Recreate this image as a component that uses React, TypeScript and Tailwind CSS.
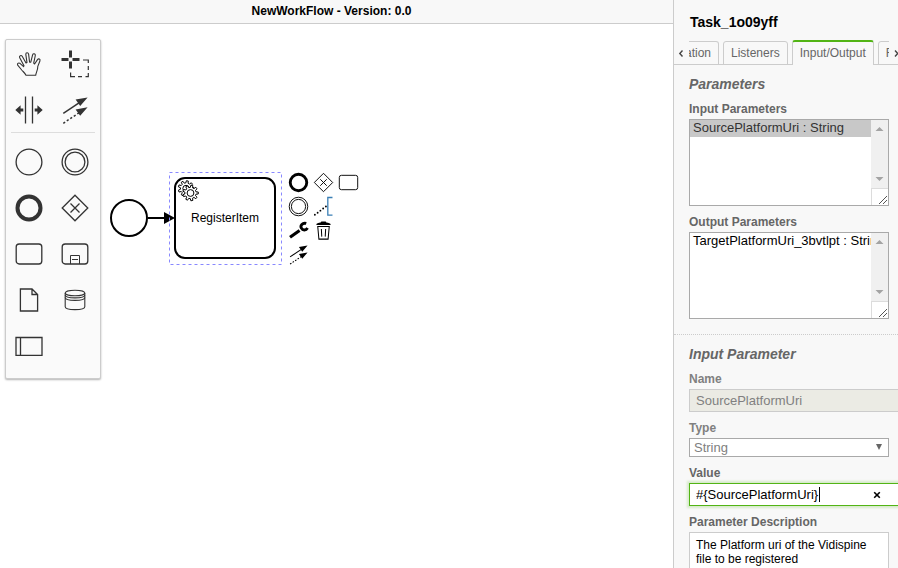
import React from "react";
import clsx from "clsx";

type IconProps = { className?: string };

const Glyph = ({
  children,
  className = "size-8",
}: {
  children: React.ReactNode;
  className?: string;
}) => (
  <svg
    viewBox="0 0 32 32"
    className={className}
    fill="none"
    stroke="currentColor"
    strokeWidth="1.3"
    aria-hidden="true"
  >
    {children}
  </svg>
);

const HandIcon = (props: IconProps) => (
  <Glyph {...props}>
    <path
      strokeWidth="1.1"
      strokeLinejoin="round"
      d="M13 27.3 C12 25 10.5 24 8.7 22 L4.7 17.2 C4 15.8 5.2 14.6 6.7 15.2 L10.6 18.6 L11 17.8 L6.6 9.6 C6 7.8 8.2 6.8 9.2 8.3 L13 15 L14 14.6 L12.8 6.4 C12.8 4.2 15.2 4.2 15.6 6.1 L16.6 14.2 L17.8 14.2 L19.6 6.8 C20.2 5 22.6 5.6 22.3 7.5 L20.7 15.2 L21.6 16 L24.5 11.6 C25.6 10.2 27.6 11.2 26.9 13 L24.8 18.4 C24.8 22 23.2 24 22.7 27.3 Z"
    />
  </Glyph>
);

const LassoIcon = (props: IconProps) => (
  <Glyph {...props}>
    <path
      strokeWidth="3"
      d="M2.5 11.5 H9.5 M13.5 11.5 H20.5 M11.5 2.5 V9.5 M11.5 13.5 V20.5"
    />
    <path
      strokeWidth="1.2"
      d="M24 12 H29.3 V15 M29.3 18 V22 M29.3 25 V28.6 H26.5 M23 28.6 H19 M16 28.6 H11.6 V24.5"
    />
  </Glyph>
);

const SpaceIcon = (props: IconProps) => (
  <Glyph {...props}>
    <path d="M12.5 2.5 V29.5 M19.5 2.5 V29.5" />
    <path
      fill="currentColor"
      stroke="none"
      d="M2.3 16 L7.6 11.3 V14.5 H10.3 V17.5 H7.6 V20.7 Z M29.7 16 L24.4 11.3 V14.5 H21.7 V17.5 H24.4 V20.7 Z"
    />
  </Glyph>
);

const ConnectIcon = (props: IconProps) => (
  <Glyph {...props}>
    <path strokeWidth="1.5" d="M4.3 19.3 L20 8.8" />
    <path strokeWidth="1.5" strokeDasharray="2.2 2" d="M4.3 29.3 L20 18.8" />
    <path
      fill="currentColor"
      stroke="none"
      d="M28.6 3.4 L16.6 5.6 L21.2 12 Z M28.6 13.2 L16.6 15.4 L21.2 21.8 Z"
    />
  </Glyph>
);

const StartEventIcon = (props: IconProps) => (
  <Glyph {...props}>
    <circle cx="16" cy="16" r="12.9" />
  </Glyph>
);

const IntermediateEventIcon = (props: IconProps) => (
  <Glyph {...props}>
    <circle cx="16" cy="16" r="12.9" />
    <circle cx="16" cy="16" r="9.9" />
  </Glyph>
);

const EndEventIcon = (props: IconProps) => (
  <Glyph {...props}>
    <circle cx="16" cy="16" r="11.5" strokeWidth="4" />
  </Glyph>
);

const GatewayIcon = (props: IconProps) => (
  <Glyph {...props}>
    <path d="M16 3.2 L28.8 16 L16 28.8 L3.2 16 Z M11.5 11.5 L20.5 20.5 M20.5 11.5 L11.5 20.5" />
  </Glyph>
);

const TaskIcon = (props: IconProps) => (
  <Glyph {...props}>
    <rect x="3.2" y="6" width="25.6" height="20" rx="3" />
  </Glyph>
);

const SubProcessIcon = (props: IconProps) => (
  <Glyph {...props}>
    <rect x="3.2" y="6" width="25.6" height="20" rx="3" />
    <path strokeWidth="1" d="M11.5 26 V17.5 H20.5 V26 M13 21.5 H19" />
  </Glyph>
);

const DataObjectIcon = (props: IconProps) => (
  <Glyph {...props}>
    <path d="M7.4 5 H19 L24.6 10.5 V27 H7.4 Z M19 5 V10.5 H24.6" />
  </Glyph>
);

const DataStoreIcon = (props: IconProps) => (
  <Glyph {...props}>
    <g strokeWidth="1.1">
      <ellipse cx="16" cy="9" rx="9.8" ry="2.8" />
      <path d="M6.2 9 V22.8 C6.2 26.6 25.8 26.6 25.8 22.8 V9" />
      <path d="M6.2 11 C6.2 14.8 25.8 14.8 25.8 11 M6.2 13.5 C6.2 17.3 25.8 17.3 25.8 13.5" />
    </g>
  </Glyph>
);

const PoolIcon = (props: IconProps) => (
  <Glyph {...props}>
    <path d="M3 7.5 H29 V25.3 H3 Z M7.5 7.5 V25.3" />
  </Glyph>
);

const AnnotationIcon = (props: IconProps) => (
  <Glyph {...props}>
    <path stroke="#3a7fb5" strokeWidth="1.8" d="M28.5 3.5 H22 V28 H28.5" />
    <path
      strokeWidth="2.6"
      strokeLinecap="round"
      strokeDasharray="0 4.8"
      d="M4 27.5 L20 15.5"
    />
  </Glyph>
);

const WrenchIcon = (props: IconProps) => (
  <Glyph {...props}>
    <path strokeWidth="4.4" d="M4.2 25.4 L17.5 16" />
    <path strokeWidth="4" d="M26.8 6.2 C21.5 4.8 18 9 20 12.8 C21.8 16.2 26.5 16 28.6 12.6" />
  </Glyph>
);

const TrashIcon = (props: IconProps) => (
  <Glyph {...props}>
    <path strokeWidth="1.4" d="M8 10.5 L9.6 28 H22.4 L24 10.5 Z M13 14 L13.6 24.5 M19 14 L18.4 24.5" />
    <path fill="currentColor" stroke="none" d="M6 8.4 C6 5.8 9 5.4 12 5 L13 3.4 H19 L20 5 C23 5.4 26 5.8 26 8.4 Z" />
  </Glyph>
);

type Tool = { title: string; Icon: React.FC<IconProps> };

const tools: Tool[] = [
  { title: "Activate the hand tool", Icon: HandIcon },
  { title: "Activate the lasso tool", Icon: LassoIcon },
  { title: "Activate the create/remove space tool", Icon: SpaceIcon },
  { title: "Activate the global connect tool", Icon: ConnectIcon },
];

const shapes: Tool[] = [
  { title: "Create StartEvent", Icon: StartEventIcon },
  { title: "Create Intermediate Event", Icon: IntermediateEventIcon },
  { title: "Create EndEvent", Icon: EndEventIcon },
  { title: "Create Gateway", Icon: GatewayIcon },
  { title: "Create Task", Icon: TaskIcon },
  { title: "Create SubProcess", Icon: SubProcessIcon },
  { title: "Create DataObject", Icon: DataObjectIcon },
  { title: "Create DataStore", Icon: DataStoreIcon },
  { title: "Create Pool", Icon: PoolIcon },
];

// null leaves an empty cell in the three column grid
const contextActions: (Tool | null)[] = [
  { title: "Append EndEvent", Icon: EndEventIcon },
  { title: "Append Gateway", Icon: GatewayIcon },
  { title: "Append Task", Icon: TaskIcon },
  { title: "Append Intermediate Event", Icon: IntermediateEventIcon },
  { title: "Append TextAnnotation", Icon: AnnotationIcon },
  null,
  { title: "Change type", Icon: WrenchIcon },
  { title: "Remove", Icon: TrashIcon },
  null,
  { title: "Connect", Icon: ConnectIcon },
];

const ToolGrid = ({ items }: { items: Tool[] }) => (
  <div className="grid grid-cols-[46px_46px]">
    {items.map(({ title, Icon }) => (
      <button
        key={title}
        aria-label={title}
        className="flex h-[46px] items-center justify-center"
      >
        <Icon />
      </button>
    ))}
  </div>
);

const Palette = () => (
  <div className="absolute left-[5px] top-[15px] rounded-xs border border-[#ccc] bg-[#fafafa] pb-[9px] pr-0.5 pt-px text-[#333] shadow-[0_1px_2px_rgba(0,0,0,0.3)]">
    <ToolGrid items={tools} />
    <hr className="-mt-px mb-1.5 ml-[5px] mr-[3px] border-[#ddd]" />
    <ToolGrid items={shapes} />
  </div>
);

const gearPath = (cx: number, cy: number, outer: number, inner: number) => {
  const teeth = 9;
  const points: string[] = [];
  for (let i = 0; i < teeth; i++) {
    [
      [-0.3, inner],
      [-0.18, outer],
      [0.18, outer],
      [0.3, inner],
    ].forEach(([shift, r]) => {
      const angle = ((i + shift) / teeth) * Math.PI * 2;
      points.push(
        `${(cx + r * Math.cos(angle)).toFixed(2)} ${(cy + r * Math.sin(angle)).toFixed(2)}`
      );
    });
  }
  return `M${points.join(" L")} Z`;
};

const Diagram = () => (
  <svg className="absolute inset-0 size-full" fill="none" stroke="black">
    <circle cx="129" cy="194" r="18" strokeWidth="2" />
    <path d="M148 194 H166" strokeWidth="2" />
    <path d="M164 188 L175 194 L164 200 Z" fill="black" stroke="none" />
    <rect x="175" y="154" width="100" height="80" rx="10" strokeWidth="2" />
    <rect
      x="169.5"
      y="148.5"
      width="112"
      height="92"
      stroke="#8888ff"
      strokeDasharray="3 3"
    />
    <g fill="white">
      <path d={gearPath(186, 164.5, 7.8, 5.6)} />
      <circle cx="186" cy="164.5" r="3.2" />
      <path d={gearPath(190.5, 169, 7.8, 5.6)} />
      <circle cx="190.5" cy="169" r="3.4" />
    </g>
    <text
      x="225"
      y="198"
      textAnchor="middle"
      fill="black"
      stroke="none"
      className="text-xs"
    >
      RegisterItem
    </text>
  </svg>
);

const ContextPad = () => (
  <div className="absolute left-[286px] top-[146px] grid grid-cols-[24px_24px_24px] gap-x-px text-black">
    {contextActions.map((action, index) =>
      action ? (
        <button
          key={action.title}
          aria-label={action.title}
          className="flex h-6 items-center justify-center"
        >
          <action.Icon className="size-[23px]" />
        </button>
      ) : (
        <span key={index} />
      )
    )}
  </div>
);

const Tab = ({
  label,
  active,
  className,
}: {
  label: string;
  active?: boolean;
  className?: string;
}) => (
  <button
    role="tab"
    aria-selected={!!active}
    className={clsx(
      "flex shrink-0 items-center overflow-hidden rounded-t-[3px] border-x border-[#ccc] px-[7px] text-[#666]",
      active
        ? "h-[25px] border-t-2 border-t-[#52b415] bg-[#f8f8f8] pb-0.5"
        : "h-6 border-y",
      className
    )}
  >
    {label}
  </button>
);

const Label = ({
  htmlFor,
  className,
  children,
}: {
  htmlFor: string;
  className?: string;
  children: React.ReactNode;
}) => (
  <label
    htmlFor={htmlFor}
    className={clsx("mb-0.5 mt-2 block font-bold leading-4", className)}
  >
    {children}
  </label>
);

const ListBox = ({
  id,
  option,
  selected,
}: {
  id: string;
  option: string;
  selected?: boolean;
}) => (
  <div className="flex h-[87px] border border-[#a9a9a9] bg-white">
    <select
      id={id}
      multiple
      defaultValue={selected ? [option] : []}
      className="h-full min-w-0 flex-1 overflow-hidden text-[13px] text-black outline-none"
    >
      <option
        value={option}
        className="h-[17px] min-h-0 overflow-hidden whitespace-nowrap p-0 pl-[3px] leading-4 checked:bg-[#c8c8c8] checked:bg-linear-to-r checked:from-[#c8c8c8] checked:to-[#c8c8c8] checked:text-[#333]"
      >
        {option}
      </option>
    </select>
    <div className="flex w-[17px] flex-col">
      <svg
        className="w-full flex-1 bg-[#f0f0f0]"
        viewBox="0 0 17 68"
        fill="#a3a3a3"
        aria-hidden="true"
      >
        <path d="M4.5 11 L8.5 7 L12.5 11 Z M4.5 57 L8.5 61 L12.5 57 Z" />
      </svg>
      <svg
        className="size-[17px] border-l border-t border-[#dcdcdc]"
        viewBox="0 0 16 16"
        stroke="#555"
        aria-hidden="true"
      >
        <path d="M7 15 L15 7 M11 15 L15 11" />
      </svg>
    </div>
  </div>
);

const PropertiesPanel = () => (
  <aside className="flex w-[225px] shrink-0 flex-col overflow-hidden border-l border-[#ccc] bg-[#f8f8f8] text-xs text-[#666]">
    <h1 className="pb-2.5 pl-4 pt-3.5 text-sm font-bold leading-4 text-black">
      Task_1o09yff
    </h1>

    <div className="flex shrink-0 shadow-[inset_0_-1px_#ccc]">
      <button aria-label="Scroll tabs left" className="w-[15px] shrink-0">
        <svg viewBox="0 0 15 24" className="h-6" fill="none" stroke="#444" strokeWidth="1.4">
          <path d="M8.5 9.5 L5.8 12.5 L8.5 15.5" />
        </svg>
      </button>
      <div role="tablist" className="flex min-w-0 flex-1 items-end gap-1 overflow-hidden">
        <Tab label="ation" className="w-[30px] justify-end rounded-tl-none border-l-0" />
        <Tab label="Listeners" />
        <Tab label="Input/Output" active />
        <Tab label="F" className="w-8" />
      </div>
      <button aria-label="Scroll tabs right" className="w-[9px] shrink-0 overflow-hidden">
        <svg viewBox="0 0 9 24" className="h-6" fill="none" stroke="#444" strokeWidth="1.4">
          <path d="M6 9.5 L8.7 12.5 L6 15.5" />
        </svg>
      </button>
    </div>

    <section className="border-b border-dotted border-[#ccc] pb-[15px] pl-[15px] pr-[9px] pt-[11px]">
      <h2 className="mb-[9px] text-sm font-bold italic leading-4">Parameters</h2>
      <Label htmlFor="inputs">Input Parameters</Label>
      <ListBox id="inputs" option="SourcePlatformUri : String" selected />
      <Label htmlFor="outputs">Output Parameters</Label>
      <ListBox id="outputs" option="TargetPlatformUri_3bvtlpt : String" />
    </section>

    <section className="pb-4 pl-[15px] pr-[9px] pt-[11px]">
      <h2 className="mb-[9px] text-sm font-bold italic leading-4">Input Parameter</h2>

      <Label htmlFor="name" className="text-[#808080]">
        Name
      </Label>
      <input
        id="name"
        disabled
        defaultValue="SourcePlatformUri"
        className="block h-[23px] w-[calc(100%+12px)] border border-[#ccc] bg-[#ebebe4] px-1.5 text-[13px] text-[#808080]"
      />

      <Label htmlFor="type" className="text-[#808080]">
        Type
      </Label>
      <div className="relative">
        <select
          id="type"
          defaultValue="String"
          className="block h-[19px] w-full appearance-none border border-[#a9a9a9] bg-white px-1 text-[13px] leading-4 text-[#808080]"
        >
          <option>String</option>
        </select>
        <svg
          viewBox="0 0 6 6"
          className="pointer-events-none absolute right-[7px] top-1.5 size-1.5"
          fill="#666"
          aria-hidden="true"
        >
          <path d="M0 0 H6 L3 6 Z" />
        </svg>
      </div>

      <Label htmlFor="value">Value</Label>
      <div className="relative">
        <input
          id="value"
          defaultValue="#{SourcePlatformUri}"
          className="block h-[23px] w-[calc(100%+12px)] border border-[#52b415] bg-white px-1.5 text-[13px] text-black shadow-[0_0_2px_2px_rgba(82,180,21,0.2)] outline-none"
        />
        <span className="absolute left-[130px] top-1 h-[15px] w-px bg-black" />
        <button
          aria-label="Clear value"
          className="absolute right-2 top-1 flex h-4 w-2 items-center justify-center text-black"
        >
          <svg viewBox="0 0 8 8" className="size-2" stroke="currentColor" strokeWidth="1.6">
            <path d="M1.2 1.2 L6.8 6.8 M6.8 1.2 L1.2 6.8" />
          </svg>
        </button>
      </div>

      <Label htmlFor="description">Parameter Description</Label>
      <textarea
        id="description"
        rows={4}
        defaultValue="The Platform uri of the Vidispine file to be registered"
        className="block w-full resize-none border border-[#ccc] bg-white px-1.5 py-[5px] leading-[14px] text-black outline-none"
      />
    </section>
  </aside>
);

export default function App() {
  return (
    <div className="flex h-screen overflow-hidden bg-white font-['Liberation_Sans',Arial,sans-serif]">
      <main className="flex min-w-0 flex-1 flex-col">
        <header className="border-b border-[#ccc] bg-[#f8f8f8] pb-1 pr-2.5 pt-[3px] text-center text-xs font-bold leading-4 text-black">
          NewWorkFlow - Version: 0.0
        </header>
        <div className="relative flex-1 overflow-hidden">
          <Diagram />
          <Palette />
          <ContextPad />
        </div>
      </main>
      <PropertiesPanel />
    </div>
  );
}
